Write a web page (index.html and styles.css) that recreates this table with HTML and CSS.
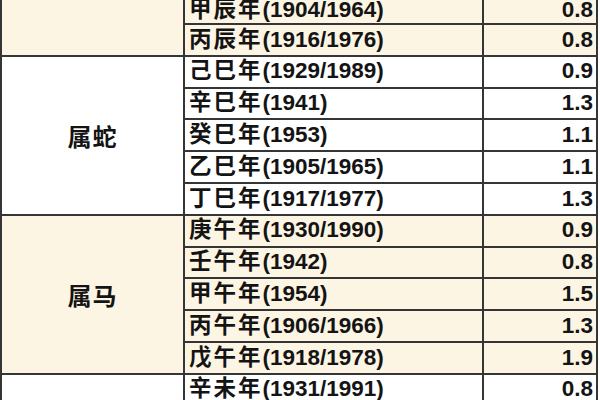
FILE: index.html
```html
<!DOCTYPE html>
<html lang="zh">
<head>
<meta charset="utf-8">
<title>生肖年份表</title>
<link rel="stylesheet" href="styles.css">
</head>
<body>
<div class="sheet">
  <div class="grid">
    <div class="label cream span2"></div>
    <div class="year cream first"><span class="cn">甲辰年</span>(1904/1964)</div>
    <div class="val cream first">0.8</div>
    <div class="year cream"><span class="cn">丙辰年</span>(1916/1976)</div>
    <div class="val cream">0.8</div>

    <div class="label white span5">属蛇</div>
    <div class="year white"><span class="cn">己巳年</span>(1929/1989)</div>
    <div class="val white">0.9</div>
    <div class="year white"><span class="cn">辛巳年</span>(1941)</div>
    <div class="val white">1.3</div>
    <div class="year white"><span class="cn">癸巳年</span>(1953)</div>
    <div class="val white">1.1</div>
    <div class="year white"><span class="cn">乙巳年</span>(1905/1965)</div>
    <div class="val white">1.1</div>
    <div class="year white"><span class="cn">丁巳年</span>(1917/1977)</div>
    <div class="val white">1.3</div>

    <div class="label cream span5">属马</div>
    <div class="year cream"><span class="cn">庚午年</span>(1930/1990)</div>
    <div class="val cream">0.9</div>
    <div class="year cream"><span class="cn">壬午年</span>(1942)</div>
    <div class="val cream">0.8</div>
    <div class="year cream"><span class="cn">甲午年</span>(1954)</div>
    <div class="val cream">1.5</div>
    <div class="year cream"><span class="cn">丙午年</span>(1906/1966)</div>
    <div class="val cream">1.3</div>
    <div class="year cream"><span class="cn">戊午年</span>(1918/1978)</div>
    <div class="val cream">1.9</div>

    <div class="label white"></div>
    <div class="year white"><span class="cn">辛未年</span>(1931/1991)</div>
    <div class="val white">0.8</div>
  </div>
</div>
</body>
</html>
```

FILE: styles.css
```css
html, body {
  margin: 0;
  padding: 0;
  background: #ffffff;
  overflow: hidden;
}

.sheet {
  width: 600px;
  height: 400px;
  overflow: hidden;
}

.grid {
  display: grid;
  grid-template-columns: 181px 297px 112px;
  grid-auto-rows: 29.8px;
  gap: 2px;
  padding: 2px;
  width: 598px;
  box-sizing: border-box;
  background: #353535;
  margin-top: -8.8px;
  font-family: "Liberation Sans", "Noto Sans CJK SC", sans-serif;
  font-weight: 700;
  font-size: 22.5px;
  color: #141414;
}

.cream { background: #fdf5e3; }
.white { background: #ffffff; }

.label {
  grid-column: 1;
  display: flex;
  align-items: center;
  justify-content: center;
  font-size: 24px;
  letter-spacing: 1px;
}

.span2 { grid-row: span 2; }
.span5 { grid-row: span 5; }

.year {
  grid-column: 2;
  display: flex;
  align-items: center;
  padding-left: 4px;
  white-space: nowrap;
  line-height: 1;
}

.first {
  padding-top: 4px;
}

.cn {
  letter-spacing: 2px;
}

.val {
  grid-column: 3;
  display: flex;
  align-items: center;
  justify-content: flex-end;
  padding-right: 3px;
  line-height: 1;
}
```
